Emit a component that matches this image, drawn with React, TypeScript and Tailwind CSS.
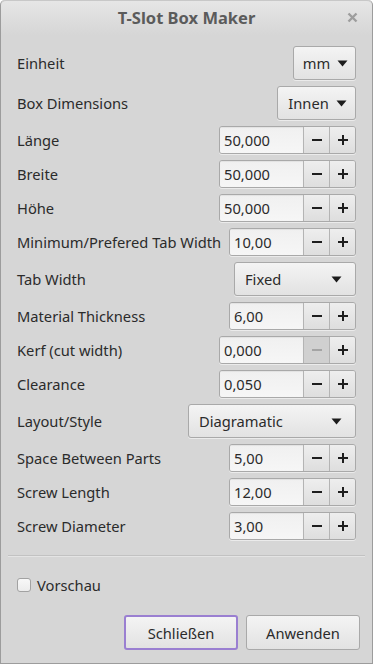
import type { ReactNode } from "react";

type Row =
  | { kind: "combo"; label: string; value: string; width: number }
  | { kind: "spin"; label: string; value: string; width: number; minusDisabled?: boolean };

const rows: Row[] = [
  { kind: "combo", label: "Einheit", value: "mm", width: 63 },
  { kind: "combo", label: "Box Dimensions", value: "Innen", width: 79 },
  { kind: "spin", label: "Länge", value: "50,000", width: 137 },
  { kind: "spin", label: "Breite", value: "50,000", width: 137 },
  { kind: "spin", label: "Höhe", value: "50,000", width: 137 },
  { kind: "spin", label: "Minimum/Prefered Tab Width", value: "10,00", width: 127 },
  { kind: "combo", label: "Tab Width", value: "Fixed", width: 122 },
  { kind: "spin", label: "Material Thickness", value: "6,00", width: 127 },
  { kind: "spin", label: "Kerf (cut width)", value: "0,000", width: 137, minusDisabled: true },
  { kind: "spin", label: "Clearance", value: "0,050", width: 137 },
  { kind: "combo", label: "Layout/Style", value: "Diagramatic", width: 168 },
  { kind: "spin", label: "Space Between Parts", value: "5,00", width: 127 },
  { kind: "spin", label: "Screw Length", value: "12,00", width: 127 },
  { kind: "spin", label: "Screw Diameter", value: "3,00", width: 127 },
];

function Arrow() {
  return (
    <svg width="11" height="7" viewBox="0 0 11 7" className="shrink-0">
      <path d="M0.5 0.5 L10.5 0.5 L5.5 6.5 Z" fill="#1c1c1c" />
    </svg>
  );
}

function Combo({ value, width }: { value: string; width: number }) {
  const wide = width > 100;
  return (
    <div
      className={`flex h-[34px] items-center rounded-[3px] border border-[#a9a9a9] bg-gradient-to-b from-[#f4f4f4] to-[#e2e2e2] shadow-[0_1px_0_rgba(255,255,255,0.5)] ${
        wide ? "justify-between pl-[10px] pr-[13px]" : "justify-center gap-[7px] pl-[2px]"
      }`}
      style={{ width }}
    >
      <span>{value}</span>
      <Arrow />
    </div>
  );
}

function StepButton({ children, disabled }: { children: ReactNode; disabled?: boolean }) {
  return (
    <div
      className={`flex w-[26px] items-center justify-center border-l border-[#b4b4b4] ${
        disabled ? "bg-[#d0d0d0]" : "bg-gradient-to-b from-[#eeeeee] to-[#dedede]"
      }`}
    >
      <svg width="12" height="12" viewBox="0 0 12 12">
        <path d="M1 6 H11" stroke={disabled ? "#a4a4a4" : "#1e1e1e"} strokeWidth="2" />
        {children}
      </svg>
    </div>
  );
}

function Spin({ value, width, minusDisabled }: { value: string; width: number; minusDisabled?: boolean }) {
  return (
    <div
      className="flex h-[28px] overflow-hidden rounded-[3px] border border-[#a9a9a9] shadow-[0_1px_0_rgba(255,255,255,0.5)]"
      style={{ width }}
    >
      <div className="flex flex-1 items-center bg-gradient-to-b from-[#f0f0f0] to-[#f6f6f6] pl-[4px] shadow-[inset_0_1px_1px_rgba(0,0,0,0.06)]">
        {value}
      </div>
      <StepButton disabled={minusDisabled} />
      <StepButton>
        <path d="M6 1 V11" stroke="#1e1e1e" strokeWidth="2" />
      </StepButton>
    </div>
  );
}

export default function App() {
  return (
    <div
      className="flex h-[664px] w-[373px] flex-col overflow-hidden rounded-t-[5px] border border-t-0 border-[#9c9c9c] bg-[#d6d6d6] text-[14.7px] leading-[22px] text-[#2b2b2b]"
      style={{ fontFamily: '"Noto Sans", "DejaVu Sans", sans-serif' }}
    >
      <div className="relative flex h-[35px] shrink-0 items-center justify-center rounded-t-[5px] border-t border-[#c8c8c8] bg-gradient-to-b from-[#e6e6e6] to-[#d6d6d6]">
        <span className="text-[16.5px] font-bold text-[#5b5b5b]">T-Slot Box Maker</span>
        <svg width="11" height="11" viewBox="0 0 11 11" className="absolute right-[14px] top-[11px]">
          <path d="M1.5 1.5 L9.5 9.5 M9.5 1.5 L1.5 9.5" stroke="#9d9d9d" strokeWidth="2.4" />
        </svg>
      </div>

      <div className="mt-[11px] flex flex-col gap-[6px] pl-[16px] pr-[16px]">
        {rows.map((row) => (
          <div key={row.label} className="flex items-center justify-between">
            <span className="whitespace-nowrap">{row.label}</span>
            {row.kind === "combo" ? (
              <Combo value={row.value} width={row.width} />
            ) : (
              <Spin value={row.value} width={row.width} minusDisabled={row.minusDisabled} />
            )}
          </div>
        ))}
      </div>

      <div className="mx-[7px] mt-[15px] h-px bg-[#c2c2c2] shadow-[0_1px_0_#e4e4e4]" />

      <div className="mt-[18px] flex items-center gap-[6px] pl-[16px]">
        <div className="h-[14px] w-[14px] rounded-[3px] border border-[#a2a2a2] bg-gradient-to-b from-[#f8f8f8] to-[#ececec]" />
        <span>Vorschau</span>
      </div>

      <div className="mt-[19px] flex justify-end gap-[8px] pr-[12px]">
        <div className="flex h-[35px] w-[114px] items-center justify-center rounded-[3px] border-2 border-[#9a7fd1] bg-gradient-to-b from-[#f4f4f4] to-[#e2e2e2]">
          Schließen
        </div>
        <div className="flex h-[35px] w-[114px] items-center justify-center rounded-[3px] border border-[#a9a9a9] bg-gradient-to-b from-[#f4f4f4] to-[#e2e2e2]">
          Anwenden
        </div>
      </div>
    </div>
  );
}
